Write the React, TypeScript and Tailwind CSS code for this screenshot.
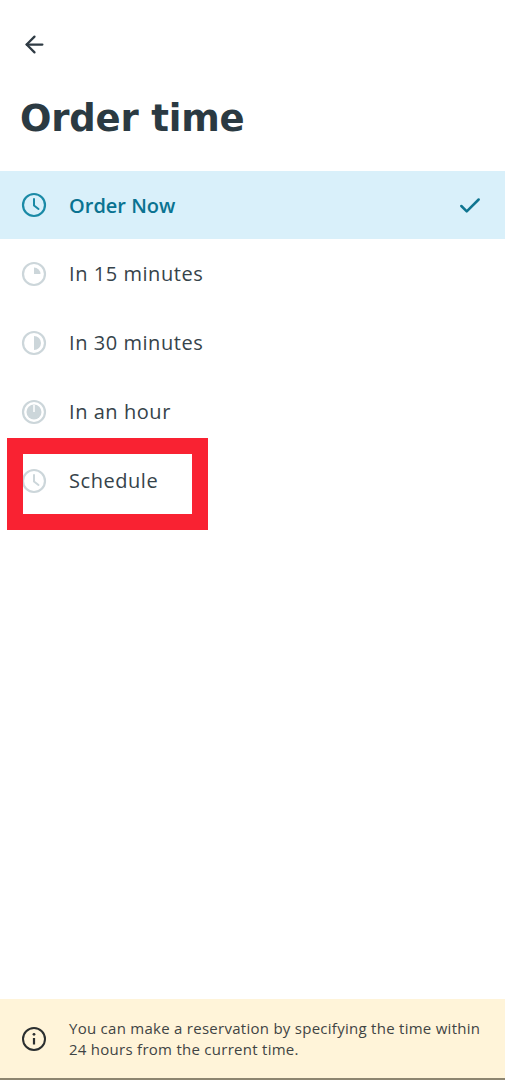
import { ArrowLeft, Check } from 'lucide-react';

const body = "font-['Open_Sans','Noto_Sans',sans-serif]";

function TimeIcon({ kind, active }: { kind: 'clock' | 'quarter' | 'half' | 'full'; active?: boolean }) {
  const ring = active ? '#1a8aa6' : '#ccd6da';
  return (
    <svg width="26" height="26" viewBox="0 0 26 26" fill="none" className="shrink-0">
      <circle cx="13" cy="13" r="11" stroke={ring} strokeWidth="2.200" />
      {kind === 'clock' && (
        <path d="M13 7v6.500l4.500 3.500" stroke={ring} strokeWidth="2" strokeLinecap="round" strokeLinejoin="round" />
      )}
      {kind === 'quarter' && <path d="M13 6.500a6.500 6.500 0 0 1 6.500 6.500H13z" fill={ring} />}
      {kind === 'half' && <path d="M13 6a7 7 0 0 1 0 14z" fill={ring} />}
      {kind === 'full' && (
        <>
          <circle cx="13" cy="13" r="7.500" fill={ring} />
          <path d="M13 6v7" stroke="#fff" strokeWidth="1.500" />
        </>
      )}
    </svg>
  );
}

const rows = [
  { label: 'In 15 minutes', kind: 'quarter' as const },
  { label: 'In 30 minutes', kind: 'half' as const },
  { label: 'In an hour', kind: 'full' as const },
  { label: 'Schedule', kind: 'clock' as const },
];

export default function App() {
  return (
    <div className={`relative flex h-[1080px] w-[505px] flex-col bg-white text-[#2f3d45] ${body}`}>
      <div className="flex h-[88px] shrink-0 items-center pl-[21px]">
        <ArrowLeft size={27} strokeWidth={2} className="text-[#2f3b44]" />
      </div>
      <h1 className="h-[83px] shrink-0 pl-[20px] font-['DejaVu_Sans',sans-serif] text-[37px] leading-[61px] font-bold tracking-[-0.2px] text-[#2b3a42]">
        Order time
      </h1>

      <div className="flex h-[68px] shrink-0 items-center gap-[22px] bg-[#d9f0fa] pr-[22px] pl-[21px]">
        <TimeIcon kind="clock" active />
        <span className="flex-1 pt-px text-[20px] font-semibold text-[#0a7391]">Order Now</span>
        <Check size={26} strokeWidth={2.300} className="mt-px text-[#0f7590]" />
      </div>

      {rows.map((row) => (
        <div key={row.label} className="flex h-[69px] shrink-0 items-center gap-[22px] pl-[21px]">
          <TimeIcon kind={row.kind} />
          <span className="pt-px text-[20px] tracking-[0.55px] text-[#36434a]">{row.label}</span>
        </div>
      ))}

      <div className="mt-auto mb-[2px] flex h-[79px] shrink-0 items-center gap-[22px] bg-[#fff4d9] pl-[21px]">
        <svg width="26" height="26" viewBox="0 0 26 26" fill="none" className="shrink-0">
          <circle cx="13" cy="13" r="11" stroke="#2b2f30" strokeWidth="2" />
          <path d="M13 12v6.500" stroke="#2b2f30" strokeWidth="2.200" />
          <circle cx="13" cy="8.300" r="1.400" fill="#2b2f30" />
        </svg>
        <p className="text-[15px] leading-[21px] tracking-[0.27px] text-[#3f4444]">
          You can make a reservation by specifying the time within
          <br />
          24 hours from the current time.
        </p>
      </div>
      <div className="absolute right-0 bottom-0 left-0 h-[2px] bg-[#8d8570]" />

      {/* red highlight drawn over the screenshot */}
      <div className="absolute top-[438px] left-[7px] h-[92px] w-[201px] border-[16px] border-[#f92232]" />
    </div>
  );
}
